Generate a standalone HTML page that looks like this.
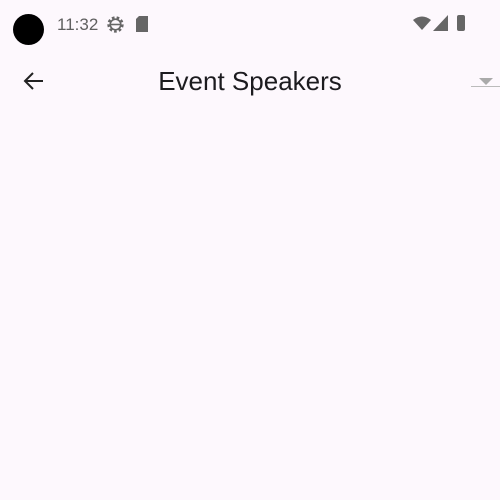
<!DOCTYPE html>
<html><head><style>
body{margin:0;width:500px;height:500px;background:#fdf8fd;position:relative;overflow:hidden;font-family:"Liberation Sans",sans-serif}
.a{position:absolute}
</style></head><body>
<div class="a" style="left:13px;top:14px;width:31px;height:31px;border-radius:50%;background:#000"></div>
<div class="a" style="left:57px;top:15px;font-size:17px;color:#606060">11:32</div>
<svg class="a" style="left:106px;top:15px" width="19" height="19" viewBox="0 0 18 18"><circle cx="9" cy="9" r="6.5" fill="none" stroke="#666" stroke-width="2.5" stroke-dasharray="2.5 2"/><circle cx="9" cy="9" r="5" fill="none" stroke="#666" stroke-width="1.5"/><line x1="4" y1="9" x2="14" y2="9" stroke="#666" stroke-width="1.5"/></svg>
<svg class="a" style="left:136px;top:16px" width="12" height="16"><path d="M3 0H12V16H0V3Z" fill="#666"/></svg>
<svg class="a" style="left:413px;top:16px" width="18" height="14"><path d="M0 4Q9-3 18 4L9 14Z" fill="#666"/></svg>
<svg class="a" style="left:433px;top:15px" width="15" height="16"><path d="M15 0V16H0Z" fill="#666"/></svg>
<div class="a" style="left:457px;top:15px;width:8px;height:16px;background:#666;border-radius:2px"></div>
<svg class="a" style="left:22px;top:71px" width="22" height="20"><path d="M21 10H3M11 2L3 10L11 18" fill="none" stroke="#222" stroke-width="2"/></svg>
<div class="a" style="left:0;width:500px;top:66px;text-align:center;font-size:26px;color:#1c1b1f">Event Speakers</div>
<svg class="a" style="left:479px;top:78px" width="14" height="8"><path d="M0 0H14L7 7Z" fill="#aaa"/></svg>
<div class="a" style="left:471px;top:86px;width:29px;height:1px;background:#bbb"></div>
</body></html>
